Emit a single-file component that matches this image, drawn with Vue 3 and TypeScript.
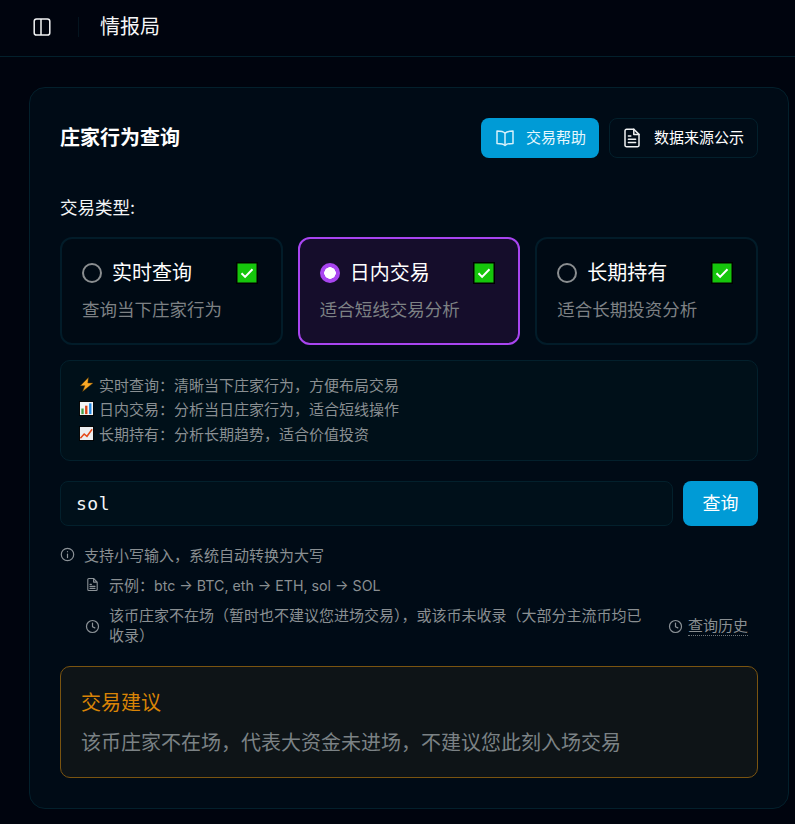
<script setup lang="ts">
interface Option { label: string; desc: string; selected: boolean }
const options: Option[] = [
  { label: '实时查询', desc: '查询当下庄家行为', selected: false },
  { label: '日内交易', desc: '适合短线交易分析', selected: true },
  { label: '长期持有', desc: '适合长期投资分析', selected: false },
]
</script>

<template>
  <div class="page">
    <header class="topbar">
      <svg class="toggle" width="18" height="18" viewBox="0 0 18 18" fill="none" stroke="#f2f4f5" stroke-width="1.5">
        <rect x="1.200" y="0.900" width="15.600" height="16.200" rx="2.400" />
        <line x1="8" y1="0.900" x2="8" y2="17.100" />
      </svg>
      <span class="divider"></span>
      <span class="brand">情报局</span>
    </header>

    <main class="content">
      <section class="card">
        <div class="head">
          <h1>庄家行为查询</h1>
          <div class="head-actions">
            <button class="btn primary">
              <svg width="20" height="20" viewBox="0 0 20 20" fill="none" stroke="#d5f1fb" stroke-width="1.500" stroke-linejoin="round">
                <path d="M10 5.200C8.600 3.600 6 3 2 3v12.400c4 0 6.600.5 8 2 1.400-1.500 4-2 8-2V3c-4 0-6.600.6-8 2.200z" />
                <line x1="10" y1="5.200" x2="10" y2="17.400" />
              </svg>
              <span>交易帮助</span>
            </button>
            <button class="btn ghost">
              <svg width="16" height="20" viewBox="0 0 16 20" fill="none" stroke="#f0f2f3" stroke-width="1.500" stroke-linejoin="round" stroke-linecap="round">
                <path d="M9.800 1.200H2.600A1.600 1.600 0 0 0 1 2.800v14.400a1.600 1.600 0 0 0 1.600 1.600h10.800a1.600 1.600 0 0 0 1.600-1.600V6.400z" />
                <path d="M9.800 1.200v5.200H15M4.400 8h2.400M4.400 11.200h7.200M4.400 14.400h7.200" />
              </svg>
              <span>数据来源公示</span>
            </button>
          </div>
        </div>

        <div class="type-label">交易类型:</div>

        <div class="options">
          <div v-for="o in options" :key="o.label" class="option" :class="{ selected: o.selected }">
            <div class="option-top">
              <span class="radio"></span>
              <span class="option-label">{{ o.label }}</span>
              <svg class="check" width="22" height="22" viewBox="0 0 22 22">
                <rect width="22" height="22" fill="#000" />
                <rect x="1.500" y="1.500" width="19" height="19" fill="#16c60c" />
                <path d="M5.500 11.300l3.600 3.600 7.400-7.600" fill="none" stroke="#fff" stroke-width="2" />
              </svg>
            </div>
            <div class="option-desc">{{ o.desc }}</div>
          </div>
        </div>

        <div class="info">
          <div class="info-row">
            <svg width="15" height="15" viewBox="0 0 16 16"><path d="M10 .5L1.500 9.200h4.800L3.800 15.500 15 6.400H9.400z" fill="#f9a825" stroke="#5a3a05" stroke-width=".5" /></svg>
            <span>实时查询：清晰当下庄家行为，方便布局交易</span>
          </div>
          <div class="info-row">
            <svg width="15" height="15" viewBox="0 0 16 16">
              <rect x="0.500" y="0.500" width="15" height="15" fill="#f5f5f5" stroke="#000" />
              <rect x="2.500" y="8" width="2.500" height="6" fill="#43a047" />
              <rect x="6.500" y="5" width="2.500" height="9" fill="#d84315" />
              <rect x="10.800" y="2.500" width="2.500" height="11.500" fill="#1e88e5" />
            </svg>
            <span>日内交易：分析当日庄家行为，适合短线操作</span>
          </div>
          <div class="info-row">
            <svg width="15" height="15" viewBox="0 0 16 16">
              <rect x="0.500" y="0.500" width="15" height="15" fill="#eceff1" stroke="#000" />
              <path d="M1.500 13l4-4.500 3 2.500L14 3.500" fill="none" stroke="#e64a19" stroke-width="1.600" />
            </svg>
            <span>长期持有：分析长期趋势，适合价值投资</span>
          </div>
        </div>

        <div class="search">
          <div class="input">sol</div>
          <button class="query">查询</button>
        </div>

        <div class="hint hint-main">
          <svg width="15" height="15" viewBox="0 0 15 15" fill="none" stroke="#8b9297" stroke-width="1.200" stroke-linecap="round">
            <circle cx="7.500" cy="7.500" r="6.200" />
            <path d="M7.500 7v3.600M7.500 4.600v.1" />
          </svg>
          <span>支持小写输入，系统自动转换为大写</span>
        </div>
        <div class="hint hint-sub">
          <svg width="15" height="15" viewBox="0 0 15 15" fill="none" stroke="#8b9297" stroke-width="1.100" stroke-linejoin="round" stroke-linecap="round">
            <path d="M8.600 1.500H3.800a1 1 0 0 0-1 1v10a1 1 0 0 0 1 1h7.400a1 1 0 0 0 1-1V5.100zM8.600 1.500v3.600h3.600M5 7.400h1.400M5 9.400h5M5 11.400h5" />
          </svg>
          <span>示例：<span class="latin">btc → BTC, eth → ETH, sol → SOL</span></span>
        </div>
        <div class="hint hint-note">
          <svg width="15" height="15" viewBox="0 0 15 15" fill="none" stroke="#8b9297" stroke-width="1.200" stroke-linecap="round" stroke-linejoin="round">
            <circle cx="7.500" cy="7.500" r="6" />
            <path d="M7.500 4v3.700l2.300 1.200" />
          </svg>
          <span class="note-text">该币庄家不在场（暂时也不建议您进场交易），或该币未收录（大部分主流币均已收录）</span>
          <span class="history">
            <svg width="15" height="15" viewBox="0 0 15 15" fill="none" stroke="#8b9297" stroke-width="1.200" stroke-linecap="round" stroke-linejoin="round">
              <circle cx="7.500" cy="7.500" r="6" />
              <path d="M7.500 4v3.700l2.300 1.200" />
            </svg>
            <span class="history-text">查询历史</span>
          </span>
        </div>

        <div class="advice">
          <div class="advice-title">交易建议</div>
          <div class="advice-text">该币庄家不在场，代表大资金未进场，不建议您此刻入场交易</div>
        </div>
      </section>
    </main>
  </div>
</template>

<style>
html, body { margin: 0; background: #00040e; }
</style>

<style scoped>
.page {
  width: 795px;
  height: 824px;
  overflow: hidden;
  background: #00040e;
  color: #fff;
  font-family: Inter, "Noto Sans CJK SC", sans-serif;
  box-sizing: border-box;
}
.topbar {
  height: 57px;
  box-sizing: border-box;
  border-bottom: 1px solid #03202c;
  display: flex;
  align-items: center;
  padding: 0 0 3px 33px;
}
.toggle { display: block; }
.divider {
  width: 1px;
  height: 20px;
  background: #04141f;
  margin: 0 21px 0 27px;
}
.brand { font-size: 20px; color: #f5f6f7; line-height: 24px; }
.content { padding: 30px 6px 0 29px; }
.card {
  height: 722px;
  box-sizing: border-box;
  background: #000b16;
  border: 1px solid #03202c;
  border-radius: 16px;
  padding: 30px 30px 0;
}
.head {
  display: flex;
  align-items: center;
  justify-content: space-between;
  height: 40px;
}
h1 { margin: 0; font-size: 20px; font-weight: 700; color: #fff; line-height: 40px; }
.head-actions { display: flex; gap: 10px; }
.btn {
  height: 40px;
  box-sizing: border-box;
  display: flex;
  align-items: center;
  border-radius: 8px;
  font-family: inherit;
  font-size: 15px;
  color: #fff;
  padding: 0 0 4px;
}
.btn svg { margin-top: 4px; }
.btn.primary { width: 118px; background: #009bd6; border: 0; gap: 11px; padding-left: 14px; color: #e6f7fd; }
.btn.ghost { width: 149px; background: #000c17; border: 1px solid #03202c; gap: 14px; padding-left: 14px; }
.type-label { margin-top: 39px; font-size: 17.500px; line-height: 22px; color: #f3f5f6; }
.options {
  margin-top: 18px;
  display: grid;
  grid-template-columns: repeat(3, 1fr);
  gap: 15px;
}
.option {
  height: 108px;
  box-sizing: border-box;
  border: 2px solid #021c29;
  border-radius: 12px;
  padding: 19px 23px 0 20px;
  background: #000a14;
}
.option.selected { border-color: #a845f0; background: #150d2b; }
.option-top { display: flex; align-items: center; height: 30px; }
.radio {
  width: 20px;
  height: 20px;
  box-sizing: border-box;
  border: 2px solid #8a8e90;
  border-radius: 50%;
  flex: none;
  margin-right: 10px;
}
.selected .radio { border: 0; background: radial-gradient(circle, #fff 0 5.500px, #a845f0 6px); }
.option-label { font-size: 20px; line-height: 30px; color: #fff; }
.check { margin-left: auto; margin-bottom: 1px; }
.option-desc { margin-top: 9px; font-size: 17.500px; line-height: 26px; color: #7d8184; }
.info {
  margin-top: 15px;
  height: 101px;
  box-sizing: border-box;
  background: #001019;
  border: 1px solid #03202c;
  border-radius: 10px;
  padding: 11px 16px 0 18px;
}
.info-row {
  display: flex;
  align-items: center;
  gap: 5px;
  height: 24.500px;
  font-size: 15px;
  color: #8a8f92;
}
.search { margin-top: 20px; display: flex; gap: 10px; }
.input {
  flex: 1;
  height: 45px;
  box-sizing: border-box;
  background: #00101a;
  border: 1px solid #03202c;
  border-radius: 8px;
  padding-left: 15px;
  font-family: "DejaVu Sans Mono", monospace;
  font-size: 18px;
  letter-spacing: .5px;
  line-height: 44px;
  color: #f3f5f6;
}
.query {
  width: 75px;
  height: 45px;
  background: #009bd6;
  border: 0;
  border-radius: 8px;
  color: #fff;
  font-family: inherit;
  font-size: 18px;
  padding: 0 0 4px;
}
.hint { display: flex; align-items: center; font-size: 15px; color: #8a8f92; }
.latin { font-size: 14.200px; }
.hint-main { margin-top: 17px; gap: 9px; height: 22px; }
.hint-sub { margin-top: 8px; margin-left: 25px; gap: 9px; height: 22px; }
.hint-note { margin-top: 11px; margin-left: 25px; height: 40px; }
.note-text { width: 545px; margin-left: 9px; line-height: 20px; }
.history { margin-left: auto; margin-right: 10px; display: flex; align-items: center; gap: 5px; }
.history-text { border-bottom: 1px dotted #6f7579; line-height: 18px; }
.advice {
  margin-top: 20px;
  height: 112px;
  box-sizing: border-box;
  background: #0e1417;
  border: 1px solid #7a5410;
  border-radius: 10px;
  padding: 21px 20px 0;
}
.advice-title { font-size: 20px; line-height: 30px; color: #d98406; }
.advice-text { margin-top: 10px; font-size: 20px; line-height: 30px; color: #7b8285; }
</style>
